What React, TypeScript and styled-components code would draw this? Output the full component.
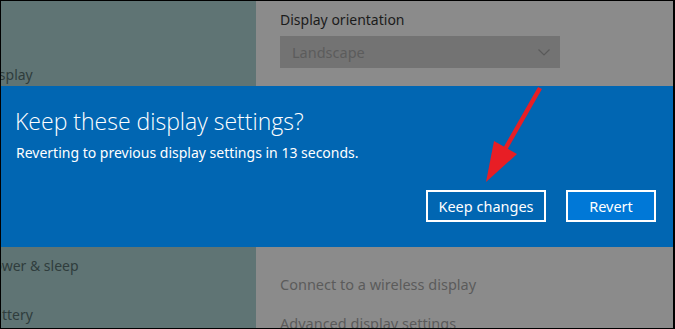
import styled, { createGlobalStyle } from 'styled-components';

const GlobalStyle = createGlobalStyle`
  html, body {
    margin: 0;
    padding: 0;
    background: #000;
  }
  body {
    font-family: 'Noto Sans', 'Open Sans', sans-serif;
  }
`;

const Frame = styled.div`
  position: relative;
  width: 675px;
  height: 329px;
  box-sizing: border-box;
  border: 1px solid #000;
  border-right-width: 2px;
  overflow: hidden;
  display: grid;
  grid-template-columns: 255px 1fr;
`;

const Sidebar = styled.nav`
  background: #5f7474;
  display: flex;
  flex-direction: column;
  padding-top: 64px;
`;

const NavItem = styled.div<{ $gap?: number }>`
  margin-left: -16px;
  margin-top: ${(p) => p.$gap ?? 0}px;
  font-size: 14px;
  line-height: 20px;
  height: 20px;
  color: #2f3d3d;
  white-space: nowrap;
`;

const Main = styled.main`
  background: #8b8b8b;
  padding: 9px 0 0 24px;
  display: flex;
  flex-direction: column;
`;

const FieldLabel = styled.div`
  font-size: 14px;
  line-height: 20px;
  color: #1b1b1b;
`;

const Select = styled.div`
  margin-top: 6px;
  width: 280px;
  height: 32px;
  box-sizing: border-box;
  background: #737373;
  display: flex;
  align-items: center;
  justify-content: space-between;
  padding: 0 10px 0 12px;
  font-size: 14.5px;
  color: #5c5c5c;
`;

const LinkText = styled.div<{ $gap: number }>`
  margin-top: ${(p) => p.$gap}px;
  font-size: 14.5px;
  line-height: 20px;
  color: #5b5b5b;
  white-space: nowrap;
`;

const Dialog = styled.section`
  position: absolute;
  left: 0;
  right: 0;
  top: 85px;
  height: 161px;
  background: #0166b2;
  color: #fff;
  box-sizing: border-box;
  padding: 20px 17px 0 14px;
  display: flex;
  flex-direction: column;
`;

const Title = styled.h1`
  margin: 0;
  font-family: 'Open Sans', 'Noto Sans', sans-serif;
  font-weight: 300;
  font-size: 23px;
  line-height: 30px;
`;

const Message = styled.p`
  margin: 7px 0 0 1px;
  font-size: 14px;
  line-height: 20px;
`;

const Actions = styled.div`
  margin-top: auto;
  margin-bottom: 25px;
  display: flex;
  justify-content: flex-end;
  gap: 20px;
`;

const Button = styled.button<{ $primary?: boolean }>`
  height: 32px;
  box-sizing: border-box;
  border: 2px solid #fff;
  background: ${(p) => (p.$primary ? '#0078d7' : 'transparent')};
  color: #fff;
  font-family: 'Noto Sans', sans-serif;
  font-size: 14.5px;
  padding: 0;
  width: ${(p) => (p.$primary ? 90 : 120)}px;
`;

const Arrow = styled.svg`
  position: absolute;
  left: 0;
  top: 0;
  pointer-events: none;
`;

export default function App() {
  return (
    <>
      <GlobalStyle />
      <Frame>
        <Sidebar>
          <NavItem>Display</NavItem>
          <NavItem $gap={28}>Notifications &amp; actions</NavItem>
          <NavItem $gap={28}>Apps &amp; features</NavItem>
          <NavItem $gap={28}>Multitasking</NavItem>
          <NavItem $gap={27}>Power &amp; sleep</NavItem>
          <NavItem $gap={29}>Battery</NavItem>
        </Sidebar>
        <Main>
          <FieldLabel>Display orientation</FieldLabel>
          <Select>
            <span>Landscape</span>
            <svg width="12" height="7" viewBox="0 0 12 7">
              <path d="M0.5 0.5 L6 6 L11.5 0.5" fill="none" stroke="#5a5a5a" strokeWidth="1.2" />
            </svg>
          </Select>
          <LinkText $gap={206}>Connect to a wireless display</LinkText>
          <LinkText $gap={19}>Advanced display settings</LinkText>
        </Main>
        <Dialog>
          <Title>Keep these display settings?</Title>
          <Message>Reverting to previous display settings in 13 seconds.</Message>
          <Actions>
            <Button>Keep changes</Button>
            <Button $primary>Revert</Button>
          </Actions>
        </Dialog>
        <Arrow width="675" height="329" viewBox="0 0 675 329">
          <line x1="539" y1="87" x2="503" y2="150" stroke="#e81e25" strokeWidth="4.5" />
          <polygon points="485,181 493,140 516,153" fill="#e81e25" />
        </Arrow>
      </Frame>
    </>
  );
}
